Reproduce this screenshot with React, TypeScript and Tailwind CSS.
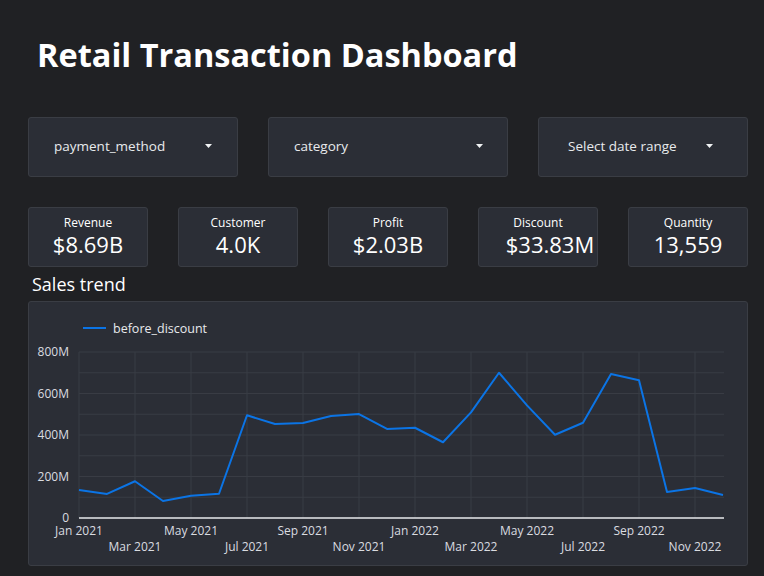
const sales = [
  135, 116, 177, 82, 107, 117, 495, 453, 458, 492, 501, 429,
  435, 365, 509, 700, 543, 401, 459, 694, 664, 125, 145, 111,
]

const ticks = [
  'Jan 2021', 'Mar 2021', 'May 2021', 'Jul 2021', 'Sep 2021', 'Nov 2021',
  'Jan 2022', 'Mar 2022', 'May 2022', 'Jul 2022', 'Sep 2022', 'Nov 2022',
]

const kpis = [
  { label: 'Revenue', value: '$8.69B', shift: '' },
  { label: 'Customer', value: '4.0K', shift: '' },
  { label: 'Profit', value: '$2.03B', shift: '' },
  { label: 'Discount', value: '$33.83M', shift: 'pl-[24px]' },
  { label: 'Quantity', value: '13,559', shift: '' },
]

const X = (i: number) => 50 + 28 * i
const Y = (v: number) => 216 - (v * 166) / 800

function Caret() {
  return (
    <svg width="7" height="4" viewBox="0 0 7 4" className="shrink-0">
      <path d="M0 0h7L3.5 4z" fill="#f1f3f4" />
    </svg>
  )
}

function Dropdown({ label, className }: { label: string; className: string }) {
  return (
    <div
      className={`h-[60px] flex items-center justify-between pb-[2px] rounded-[3px] border border-[#3a3d44] bg-[#2b2e36] text-[13.5px] text-[#e8eaed] ${className}`}
    >
      <span>{label}</span>
      <Caret />
    </div>
  )
}

function SalesChart() {
  const points = sales.map((v, i) => `${X(i)},${Y(v)}`).join(' ')
  return (
    <svg width="718" height="263" className="block">
      <line x1="54" y1="26" x2="77" y2="26" stroke="#0b74e5" strokeWidth="2" />
      <text x="84" y="30.5" fill="#e8eaed" fontSize="12.5">before_discount</text>

      {[1, 2, 3, 4, 5, 6, 7, 8].map((k) => (
        <line key={k} x1="50" x2="695" y1={Y(k * 100)} y2={Y(k * 100)} stroke="#393c44" strokeWidth="1" />
      ))}
      {ticks.map((_, k) => (
        <line key={k} x1={X(k * 2)} x2={X(k * 2)} y1="50" y2="216" stroke="#393c44" strokeWidth="1" />
      ))}
      {[0, 200, 400, 600, 800].map((v) => (
        <text key={v} x="40" y={Y(v) + 4} textAnchor="end" fill="#dadce0" fontSize="12">
          {v === 0 ? '0' : `${v}M`}
        </text>
      ))}
      {ticks.map((t, k) => (
        <text
          key={t}
          x={X(k * 2)}
          y={k % 2 === 0 ? 233 : 249}
          textAnchor="middle"
          fill="#dadce0"
          fontSize="12"
        >
          {t}
        </text>
      ))}

      <polyline points={points} fill="none" stroke="#0b74e5" strokeWidth="2" strokeLinejoin="round" />
      <line x1="50" x2="695" y1="216" y2="216" stroke="#e8eaed" strokeWidth="1.5" />
    </svg>
  )
}

export default function App() {
  return (
    <div className="w-[764px] h-[576px] overflow-hidden bg-[#202124] text-white font-['Open_Sans',sans-serif]">
      <h1 className="pt-[39px] pl-[37px] text-[32.5px] leading-[32px] font-bold">Retail Transaction Dashboard</h1>

      <div className="mt-[46px] flex gap-[30px] pl-[28px]">
        <Dropdown label="payment_method" className="w-[210px] pl-[25px] pr-[25px]" />
        <Dropdown label="category" className="w-[240px] pl-[25px] pr-[24px]" />
        <Dropdown label="Select date range" className="w-[210px] pl-[29px] pr-[34px]" />
      </div>

      <div className="mt-[30px] flex gap-[30px] pl-[28px]">
        {kpis.map((k) => (
          <div
            key={k.label}
            className="w-[120px] h-[60px] flex flex-col items-center pt-[7px] rounded-[3px] border border-[#3a3d44] bg-[#2b2e36]"
          >
            <span className="text-[12px] leading-[15px]">{k.label}</span>
            <span className={`mt-[1px] text-[22px] leading-[26px] whitespace-nowrap ${k.shift}`}>{k.value}</span>
          </div>
        ))}
      </div>

      <div className="mt-[5px] pl-[32px] text-[18px] leading-[24px]">Sales trend</div>

      <div className="mt-[5px] ml-[28px] w-[720px] h-[265px] rounded-[3px] border border-[#3a3d44] bg-[#2b2e36]">
        <SalesChart />
      </div>
    </div>
  )
}
